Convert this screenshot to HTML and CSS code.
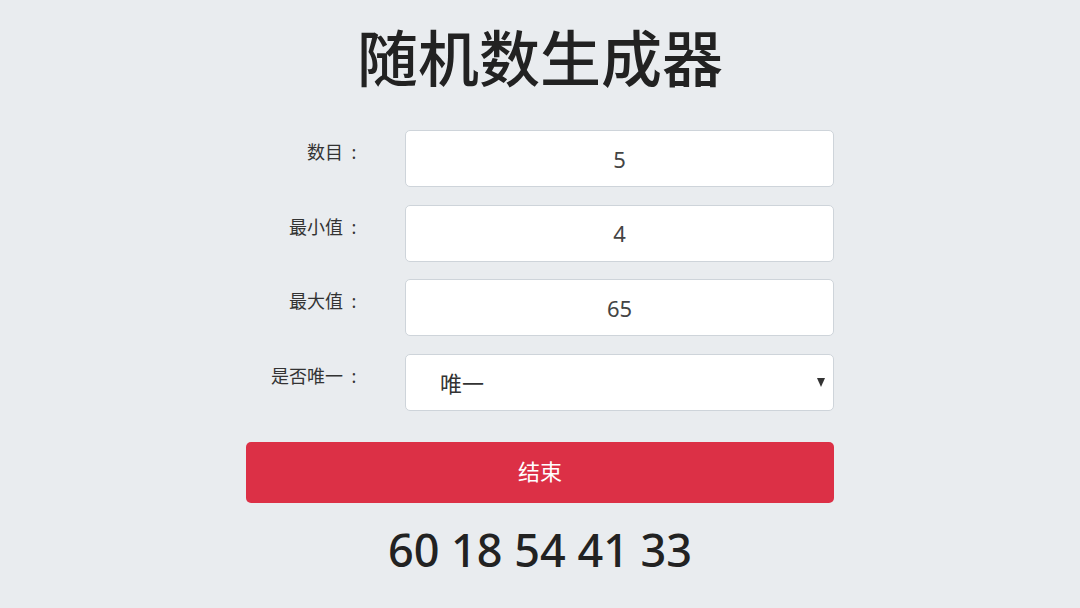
FILE: index.html
```html
<!DOCTYPE html>
<html lang="zh-CN">
<head>
<meta charset="utf-8">
<title>随机数生成器</title>
<link rel="stylesheet" href="styles.css">
</head>
<body>
<main class="page">
  <h1 class="title">随机数生成器</h1>
  <form class="form">
    <label class="label" for="count">数目<span class="colon">:</span></label>
    <input class="field" id="count" type="text" value="5">
    <label class="label" for="min">最小值<span class="colon">:</span></label>
    <input class="field" id="min" type="text" value="4">
    <label class="label" for="max">最大值<span class="colon">:</span></label>
    <input class="field" id="max" type="text" value="65">
    <label class="label" for="unique">是否唯一<span class="colon">:</span></label>
    <div class="select-wrap">
      <select class="field select" id="unique">
        <option>唯一</option>
        <option>不唯一</option>
      </select>
      <span class="caret"></span>
    </div>
    <button class="btn" type="button">结束</button>
  </form>
  <div class="result">60 18 54 41 33</div>
</main>
</body>
</html>
```

FILE: styles.css
```css
html, body {
  margin: 0;
  padding: 0;
}
body {
  background: #e9ecef;
  font-family: "Noto Sans", "Noto Sans CJK SC", sans-serif;
  color: #212529;
}
.page {
  width: 588px;
  margin: 0 auto;
  padding-top: 20px;
}
.title {
  margin: 0;
  text-align: center;
  font-family: "Noto Sans CJK SC", sans-serif;
  font-size: 61px;
  line-height: 72px;
  font-weight: 500;
  color: #222;
}
.form {
  margin-top: 38px;
  display: grid;
  grid-template-columns: 159px 429px;
  grid-auto-rows: 57px;
  row-gap: 17.5px;
}
.label {
  align-self: start;
  padding-top: 8px;
  padding-right: 40px;
  text-align: right;
  font-family: "Noto Sans CJK SC", sans-serif;
  font-size: 18px;
  line-height: 27px;
  color: #333;
}
.colon {
  display: inline-block;
  width: 22px;
  text-align: center;
  font-family: "Noto Sans", sans-serif;
}
.field {
  box-sizing: border-box;
  width: 100%;
  height: 57px;
  margin: 0;
  border: 1px solid #ced4da;
  border-radius: 5px;
  background: #fff;
  text-align: center;
  font-family: "Noto Sans", "Noto Sans CJK SC", sans-serif;
  font-size: 22px;
  color: #444;
  outline: none;
}
.select-wrap {
  position: relative;
}
.select {
  -webkit-appearance: none;
  appearance: none;
  text-align: left;
  padding: 0 0 0 34px;
  font-family: "Noto Sans CJK SC", sans-serif;
  font-size: 22px;
  color: #333;
}
.caret {
  position: absolute;
  right: 9px;
  top: 24px;
  width: 0;
  height: 0;
  border-left: 4px solid transparent;
  border-right: 4px solid transparent;
  border-top: 9px solid #333;
  pointer-events: none;
}
.btn {
  grid-column: 1 / 3;
  margin-top: 13.5px;
  height: 61px;
  border: none;
  border-radius: 5px;
  background: #dc3046;
  color: #fff;
  font-family: "Noto Sans CJK SC", sans-serif;
  font-size: 22px;
  line-height: 1;
  padding: 0 0 4px;
}
.result {
  margin-top: 38px;
  text-align: center;
  font-family: "Noto Sans", sans-serif;
  font-size: 45px;
  line-height: 54px;
  font-weight: 500;
  color: #222;
}
```
